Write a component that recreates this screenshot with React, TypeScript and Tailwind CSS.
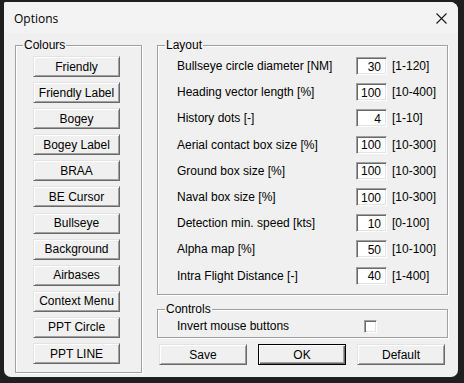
import React from 'react';

const colourButtons = [
  'Friendly',
  'Friendly Label',
  'Bogey',
  'Bogey Label',
  'BRAA',
  'BE Cursor',
  'Bullseye',
  'Background',
  'Airbases',
  'Context Menu',
  'PPT Circle',
  'PPT LINE',
];

const layoutRows = [
  { label: 'Bullseye circle diameter [NM]', value: '30', range: '[1-120]' },
  { label: 'Heading vector length [%]', value: '100', range: '[10-400]' },
  { label: 'History dots [-]', value: '4', range: '[1-10]' },
  { label: 'Aerial contact box size [%]', value: '100', range: '[10-300]' },
  { label: 'Ground box size [%]', value: '100', range: '[10-300]' },
  { label: 'Naval box size [%]', value: '100', range: '[10-300]' },
  { label: 'Detection min. speed [kts]', value: '10', range: '[0-100]' },
  { label: 'Alpha map [%]', value: '50', range: '[10-100]' },
  { label: 'Intra Flight Distance [-]', value: '40', range: '[1-400]' },
];

// classic raised 3D button
const raised =
  'border-t border-l border-b border-r border-t-[#e3e3e3] border-l-[#e3e3e3] border-b-[#696969] border-r-[#696969] shadow-[inset_1px_1px_0_#ffffff,inset_-1px_-1px_0_#a0a0a0] bg-[#f0f0f0]';

// sunken field
const sunken =
  'border-t border-l border-b border-r border-t-[#a0a0a0] border-l-[#a0a0a0] border-b-[#ffffff] border-r-[#ffffff] shadow-[inset_1px_1px_0_#696969,inset_-1px_-1px_0_#e3e3e3] bg-white';

const groupBox =
  'border border-[#a0a0a0] shadow-[inset_1px_1px_0_#ffffff,1px_1px_0_#ffffff] min-w-0';

const Legend = ({ children }: { children: React.ReactNode }) => (
  <legend className="ml-[7px] px-[1px] h-[14px] leading-[14px] text-[12px]">{children}</legend>
);

const DlgButton = ({ children, isDefault = false }: { children: React.ReactNode; isDefault?: boolean }) => (
  <button
    className={
      isDefault
        ? 'w-[88px] h-[21px] border border-black bg-[#f0f0f0] shadow-[inset_1px_1px_0_#ffffff,inset_-1px_-1px_0_#696969,inset_-2px_-2px_0_#a0a0a0] text-[12px] leading-none'
        : `w-[88px] h-[21px] ${raised} text-[12px] leading-none`
    }
  >
    {children}
  </button>
);

export default function App() {
  return (
    <div
      className="w-[464px] h-[383px] bg-[#1f1f1f] pl-[4px] pt-[2px] overflow-hidden text-black"
      style={{ fontFamily: '"Liberation Sans", Arial, sans-serif' }}
    >
      <div className="w-[454px] h-[375px] bg-[#f0f0f0] rounded-tl-[2px] rounded-tr-[8px] rounded-b-[7px] overflow-hidden flex flex-col">
        {/* Title bar */}
        <div className="h-[31px] bg-[#f3f3f3] flex items-center justify-between pl-[10px] pr-[10px]">
          <span className="text-[12px] pt-[2px]" style={{ fontFamily: '"Open Sans", "Noto Sans", sans-serif' }}>
            Options
          </span>
          <svg width="11" height="11" viewBox="0 0 11 11" className="mr-[1px] mt-[2px]">
            <path d="M0.5 0.5 L10.5 10.5 M10.5 0.5 L0.5 10.5" stroke="#1a1a1a" strokeWidth="1.1" fill="none" />
          </svg>
        </div>

        {/* Body */}
        <div className="flex pl-[11px] pt-[5px] gap-[15px]">
          {/* Colours */}
          <fieldset className={`w-[127px] h-[335px] ${groupBox}`}>
            <Legend>Colours</Legend>
            <div className="flex flex-col gap-[5.1px] pl-[17px] pt-[4px]">
              {colourButtons.map((b) => (
                <button key={b} className={`w-[87px] h-[21px] ${raised} text-[12px] leading-none`}>
                  {b}
                </button>
              ))}
            </div>
          </fieldset>

          {/* Right column */}
          <div className="flex flex-col w-[291px]">
            <fieldset className={`h-[257px] ${groupBox}`}>
              <Legend>Layout</Legend>
              <div className="flex flex-col pt-[1px]">
                {layoutRows.map((r) => (
                  <div key={r.label} className="h-[26.2px] flex items-center text-[12px]">
                    <span className="w-[198px] pl-[19px] whitespace-nowrap">{r.label}</span>
                    <div className={`w-[31px] h-[18px] ${sunken} flex items-center justify-end pr-[5px] pt-[1px]`}>
                      {r.value}
                    </div>
                    <span className="ml-[5px] whitespace-nowrap">{r.range}</span>
                  </div>
                ))}
              </div>
            </fieldset>

            <fieldset className={`mt-[7px] h-[36px] ${groupBox}`}>
              <Legend>Controls</Legend>
              <div className="h-[20px] flex items-center text-[12px]">
                <span className="w-[206px] pl-[19px] whitespace-nowrap">Invert mouse buttons</span>
                <div className={`w-[13px] h-[13px] ${sunken}`} />
              </div>
            </fieldset>

            <div className="mt-[6px] flex justify-between pl-[2px] pr-[3px]">
              <DlgButton>Save</DlgButton>
              <DlgButton isDefault>OK</DlgButton>
              <DlgButton>Default</DlgButton>
            </div>
          </div>
        </div>
      </div>
    </div>
  );
}
